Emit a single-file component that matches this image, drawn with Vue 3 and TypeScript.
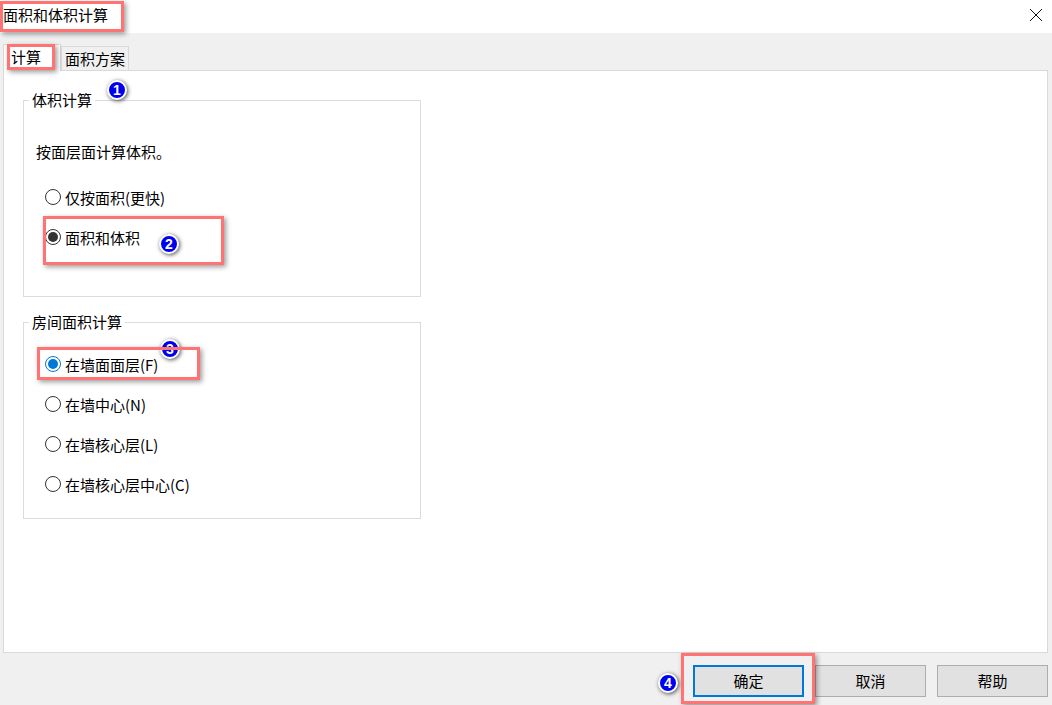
<script setup lang="ts">
interface RadioItem {
  label: string
  state?: 'dark' | 'blue'
}

const volumeOptions: RadioItem[] = [
  { label: '仅按面积(更快)' },
  { label: '面积和体积', state: 'dark' }
]

const roomOptions: RadioItem[] = [
  { label: '在墙面面层(F)', state: 'blue' },
  { label: '在墙中心(N)' },
  { label: '在墙核心层(L)' },
  { label: '在墙核心层中心(C)' }
]

// annotations drawn over the dialog: [left, top, width, height]
const marks = [
  [0, 1, 124, 31],
  [7, 44, 48, 26],
  [43, 216, 181, 49],
  [37, 347, 163, 33],
  [681, 653, 134, 51]
]

const badges = [
  { n: 1, x: 107, y: 80 },
  { n: 2, x: 159, y: 234 },
  { n: 3, x: 160, y: 339 },
  { n: 4, x: 658, y: 673 }
]
</script>

<template>
  <div class="dialog">
    <div class="titlebar">
      <span class="title">面积和体积计算</span>
      <svg class="close" width="14" height="14" viewBox="0 0 14 14">
        <path d="M1 1 L13 13 M13 1 L1 13" stroke="#111" stroke-width="1" fill="none" />
      </svg>
    </div>

    <div class="tabs">
      <div class="tab active">计算</div>
      <div class="tab">面积方案</div>
    </div>

    <div class="panel">
      <fieldset class="group volume">
        <legend>体积计算</legend>
        <p class="hint">按面层面计算体积。</p>
        <div class="radios">
          <div v-for="item in volumeOptions" :key="item.label" class="radio-row">
            <span :class="['radio', item.state]"></span>
            <span class="radio-label">{{ item.label }}</span>
          </div>
        </div>
      </fieldset>

      <fieldset class="group room">
        <legend>房间面积计算</legend>
        <div class="radios">
          <div v-for="item in roomOptions" :key="item.label" class="radio-row">
            <span :class="['radio', item.state]"></span>
            <span class="radio-label">{{ item.label }}</span>
          </div>
        </div>
      </fieldset>
    </div>

    <div class="footer">
      <button class="btn primary"><span>确定</span></button>
      <button class="btn"><span>取消</span></button>
      <button class="btn"><span>帮助</span></button>
    </div>

    <div
      v-for="b in badges"
      :key="b.n"
      class="badge"
      :style="{ left: b.x + 'px', top: b.y + 'px' }"
    >{{ b.n }}</div>
    <div
      v-for="(m, i) in marks"
      :key="i"
      class="mark"
      :style="{ left: m[0] + 'px', top: m[1] + 'px', width: m[2] + 'px', height: m[3] + 'px' }"
    ></div>
  </div>
</template>

<style>
html,
body {
  margin: 0;
  overflow: hidden;
}
</style>

<style scoped>
.dialog {
  position: relative;
  width: 1052px;
  height: 705px;
  display: flex;
  flex-direction: column;
  background: #f0f0f0;
  color: #000;
  font-family: "Noto Sans CJK SC", "Liberation Sans", sans-serif;
  font-size: 15px;
  overflow: hidden;
}

.titlebar {
  height: 33px;
  flex: none;
  display: flex;
  align-items: center;
  justify-content: space-between;
  padding: 0 9px 0 3px;
  background: #fff;
}

.title {
  font-size: 15px;
  line-height: 30px;
  margin-top: -3px;
}

.close {
  margin-top: -4px;
}

.tabs {
  display: flex;
  align-items: flex-end;
  height: 38px;
  flex: none;
  padding-left: 3px;
}

.tab {
  height: 24px;
  width: 68px;
  margin-left: 0;
  margin-bottom: 1px;
  box-sizing: border-box;
  border: 1px solid #d9d9d9;
  border-bottom: none;
  background: #f0f0f0;
  text-align: center;
  line-height: 23px;
}

.tab.active {
  height: 27px;
  width: 58px;
  margin-bottom: 0;
  background: #fff;
  text-align: left;
  padding-left: 7px;
  line-height: 24px;
  position: relative;
  z-index: 1;
}

.panel {
  height: 583px;
  flex: none;
  box-sizing: border-box;
  margin: -1px 4px 0 3px;
  border: 1px solid #d9d9d9;
  background: #fff;
  padding: 19px 0 0 19px;
  display: flex;
  flex-direction: column;
  gap: 15px;
}

.group {
  width: 398px;
  height: 207px;
  box-sizing: border-box;
  margin: 0;
  padding: 0 0 0 21px;
  border: 1px solid #dcdcdc;
  position: relative;
}

.group legend {
  padding: 0 3px;
  margin-left: -16px;
  line-height: 20px;
}

.hint {
  margin: 32px 0 0 -9px;
  line-height: 20px;
}

.volume .radios {
  margin-top: 25px;
}

.room .radios {
  margin-top: 22px;
}

.radios {
  display: flex;
  flex-direction: column;
  gap: 20px;
}

.radio-row {
  display: flex;
  align-items: center;
  gap: 4px;
  height: 20px;
}

.radio-label {
  line-height: 20px;
  margin-top: 1px;
}

.radio {
  width: 16px;
  height: 16px;
  box-sizing: border-box;
  border: 1px solid #333;
  border-radius: 50%;
  background: #fff;
  flex: none;
  position: relative;
}

.radio.dark::after,
.radio.blue::after {
  content: "";
  position: absolute;
  inset: 2px;
  border-radius: 50%;
  background: #333;
}

.radio.blue {
  border-color: #0078d7;
}

.radio.blue::after {
  background: #0078d7;
}

.footer {
  flex: 1;
  display: flex;
  justify-content: flex-end;
  align-items: flex-start;
  gap: 11px;
  padding: 12px 4px 0 0;
}

.btn {
  width: 111px;
  height: 32px;
  box-sizing: border-box;
  border: 1px solid #adadad;
  background: #e1e1e1;
  color: #000;
  font: inherit;
  padding: 0 0 2px;
}

.btn.primary {
  border: 2px solid #0078d7;
}

.badge {
  position: absolute;
  z-index: 2;
  width: 20px;
  height: 20px;
  box-sizing: border-box;
  border: 2px solid #fff;
  border-radius: 50%;
  background: #0000f0;
  color: #fff;
  font-family: "Liberation Sans", sans-serif;
  font-size: 14px;
  font-weight: 700;
  line-height: 16px;
  text-align: center;
  box-shadow: 1px 1px 4px rgba(0, 0, 0, 0.7);
}

.mark {
  position: absolute;
  z-index: 2;
  box-sizing: border-box;
  border: 3px solid #ff7373;
  box-shadow: 2px 2px 5px rgba(0, 0, 0, 0.4);
}
</style>
